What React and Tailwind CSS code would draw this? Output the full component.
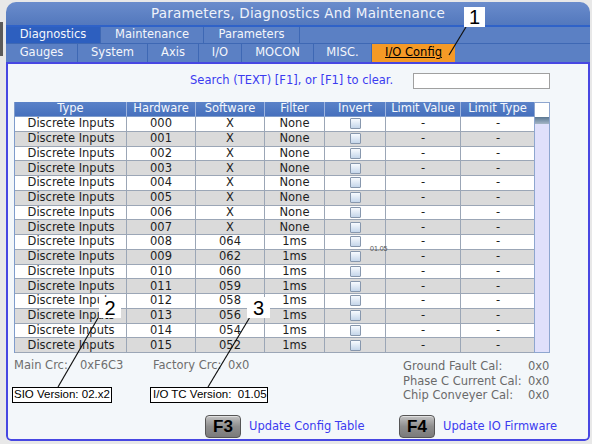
import React from "react";

const FONT = "font-['DejaVu_Sans',sans-serif]";

const hw = Array.from({ length: 16 }, (_, i) => String(i).padStart(3, "0"));
const sw = ["X", "X", "X", "X", "X", "X", "X", "X", "064", "062", "060", "059", "058", "056", "054", "052"];

function Checkbox() {
  return (
    <div className="w-[11px] h-[11px] border border-[#8797ad] bg-gradient-to-b from-[#f8fbff] to-[#c5d6ea] rounded-[1px]" />
  );
}

function Row({ i }) {
  const bg = i % 2 === 0 ? "bg-white" : "bg-[#dadada]";
  const cell = "flex items-center justify-center border-r border-b border-[#9ba6b6] h-[14.75px]";
  return (
    <>
      <div className={`${cell} ${bg} pl-[1px]`}>Discrete Inputs</div>
      <div className={`${cell} ${bg}`}>{hw[i]}</div>
      <div className={`${cell} ${bg}`}>{sw[i]}</div>
      <div className={`${cell} ${bg}`}>{i < 8 ? "None" : "1ms"}</div>
      <div className={`${cell} ${bg}`}>
        <Checkbox />
      </div>
      <div className={`${cell} ${bg}`}>-</div>
      <div className={`${cell} ${bg} border-r-0`}>-</div>
    </>
  );
}

function FKey({ label }) {
  return (
    <div className="w-[36px] h-[23px] rounded-[4px] border border-[#555] bg-gradient-to-b from-[#c4c4c4] via-[#8e8e8e] to-[#7a7a7a] flex items-center justify-center shadow-[inset_0_1px_0_#e0e0e0]">
      <span className="font-['Liberation_Sans',Arial,sans-serif] font-bold text-[17px] text-black leading-none">{label}</span>
    </div>
  );
}

export default function App() {
  const headers = ["Type", "Hardware", "Software", "Filter", "Invert", "Limit Value", "Limit Type"];
  const row1 = [
    ["Diagnostics", "w-[95px]", true],
    ["Maintenance", "w-[103px]", false],
    ["Parameters", "w-[96px]", false],
  ];
  const row2 = [
    ["Gauges", "w-[72px]"],
    ["System", "w-[70px]"],
    ["Axis", "w-[51px]"],
    ["I/O", "w-[43px]"],
    ["MOCON", "w-[72px]"],
    ["MISC.", "w-[58px]"],
  ];
  return (
    <div className={`relative w-[592px] h-[444px] bg-[#e8e8e8] flex overflow-hidden ${FONT}`}>
      <div className="w-[6px] flex flex-col">
        <div className="h-[22px]" />
        <div className="h-[34px] w-[3px] bg-[#5a5a5a]" />
      </div>
      <div className="w-[584px] mt-[2px] h-[439px] flex flex-col rounded-t-[10px] rounded-b-[5px] overflow-hidden">
        {/* title bar */}
        <div className="h-[25px] bg-gradient-to-b from-[#6a8ccc] to-[#5378bd] flex items-center justify-center border-b-2 border-[#2f62c8]">
          <span className="text-[13.5px] text-[#eef2fa] tracking-[0.2px]">Parameters, Diagnostics And Maintenance</span>
        </div>
        {/* tab row 1 */}
        <div className="h-[17px] flex bg-[#5b80c4] border-b border-[#3e68b4] text-[11.5px] text-[#f4f6fb]">
          {row1.map(([t, w, act]) => (
            <div
              key={t}
              className={`${w} flex items-center justify-center border-r border-[#3e68b4] ${act ? "bg-[#2d5fbf]" : "bg-[#5b80c4]"}`}
            >
              {t}
            </div>
          ))}
        </div>
        {/* tab row 2 */}
        <div className="h-[18px] flex bg-[#5b80c4] text-[11.5px] text-[#f4f6fb]">
          {row2.map(([t, w]) => (
            <div key={t} className={`${w} flex items-center justify-center border-r border-[#3e68b4]`}>
              {t}
            </div>
          ))}
          <div className="w-[83px] flex items-center justify-center bg-[#f59a26] text-black underline">I/O Config</div>
        </div>
        {/* content */}
        <div className="flex-1 flex flex-col bg-[#f3f7fa] border-2 border-[#4747e2] rounded-b-[5px] text-[11.5px]">
          <div className="mt-[9px] h-[16px] flex items-center">
            <span className="ml-[182px] w-[223px] text-[#3b3bf0]">Search (TEXT) [F1], or [F1] to clear.</span>
            <div className="w-[137px] h-[16px] bg-white border border-[#a0a0a0]" />
          </div>
          {/* table */}
          <div className="mt-[13px] ml-[6px] flex text-[#1e1e1e]">
            <div className="w-[520px] border-l border-[#7f9ccc]">
              <div className="grid grid-cols-[112px_69px_69px_60px_61px_75px_74px]">
                {headers.map((h) => (
                  <div
                    key={h}
                    className="h-[15px] flex items-center justify-center bg-gradient-to-b from-[#5a82c8] to-[#4670bd] text-[#f6f8fc] border-r border-[#9db4de] last:border-r-0 border-b border-b-[#7f9ccc]"
                  >
                    {h}
                  </div>
                ))}
                {hw.map((_, i) => (
                  <Row key={i} i={i} />
                ))}
              </div>
            </div>
            <div className="w-[16px] flex flex-col border-l border-r border-b border-[#8ea6cf]">
              <div className="h-[15px] bg-white border-t border-[#8ea6cf]" />
              <div className="flex-1 bg-[#e0e0fb] flex flex-col">
                <div className="h-[7px] bg-gradient-to-b from-[#5b7893] to-[#a6b6c6]" />
              </div>
            </div>
          </div>
          {/* bottom info */}
          <div className="mt-[6px] flex">
            <div className="w-[395px] flex flex-col">
              <div className="h-[14px] flex items-center text-[#6e6e6e] pl-[6px]">
                <span className="w-[66px]">Main Crc:</span>
                <span className="w-[73px]">0xF6C3</span>
                <span className="w-[75px]">Factory Crc:</span>
                <span>0x0</span>
              </div>
              <div className="mt-[14px] flex font-['Liberation_Sans',Arial,sans-serif] text-[11.5px] text-black whitespace-pre">
                <div className="ml-[4px] w-[100px] h-[16px] border border-black bg-white flex items-center pl-[1px]">SIO Version: 02.x2</div>
                <div className="ml-[38px] w-[118px] h-[16px] border border-black bg-white flex items-center pl-[2px]">I/O TC Version:  01.05</div>
              </div>
            </div>
            <div className="grid grid-cols-[125px_auto] text-[#6a6a6a] leading-[14px]">
              <span>Ground Fault Cal:</span>
              <span>0x0</span>
              <span>Phase C Current Cal:</span>
              <span>0x0</span>
              <span>Chip Conveyer Cal:</span>
              <span>0x0</span>
            </div>
          </div>
          <div className="mt-[12px] flex items-center text-[#3b3bf0]">
            <div className="ml-[197px]">
              <FKey label="F3" />
            </div>
            <span className="ml-[8px] w-[150px]">Update Config Table</span>
            <FKey label="F4" />
            <span className="ml-[8px]">Update IO Firmware</span>
          </div>
        </div>
      </div>

      {/* annotation overlays */}
      <span className="absolute left-[370px] top-[244px] text-[7px] text-[#555] font-['Liberation_Sans',Arial,sans-serif]">01.05</span>
      <svg className="absolute left-0 top-0 pointer-events-none" width="592" height="444">
        <line x1="466" y1="27" x2="449" y2="55" stroke="#111" strokeWidth="1.2" />
        <line x1="98" y1="318" x2="58" y2="387" stroke="#111" strokeWidth="1.2" />
        <line x1="250" y1="317" x2="208" y2="387" stroke="#111" strokeWidth="1.2" />
      </svg>
      <div className="absolute left-[464px] top-[7px] w-[21px] h-[20px] bg-white flex items-center justify-center font-['Liberation_Sans',Arial,sans-serif] text-[20px] text-black leading-none">1</div>
      <div className="absolute left-[99px] top-[297px] w-[22px] h-[21px] bg-white flex items-center justify-center font-['Liberation_Sans',Arial,sans-serif] text-[20px] text-black leading-none">2</div>
      <div className="absolute left-[247px] top-[297px] w-[23px] h-[21px] bg-white flex items-center justify-center font-['Liberation_Sans',Arial,sans-serif] text-[20px] text-black leading-none">3</div>
    </div>
  );
}
